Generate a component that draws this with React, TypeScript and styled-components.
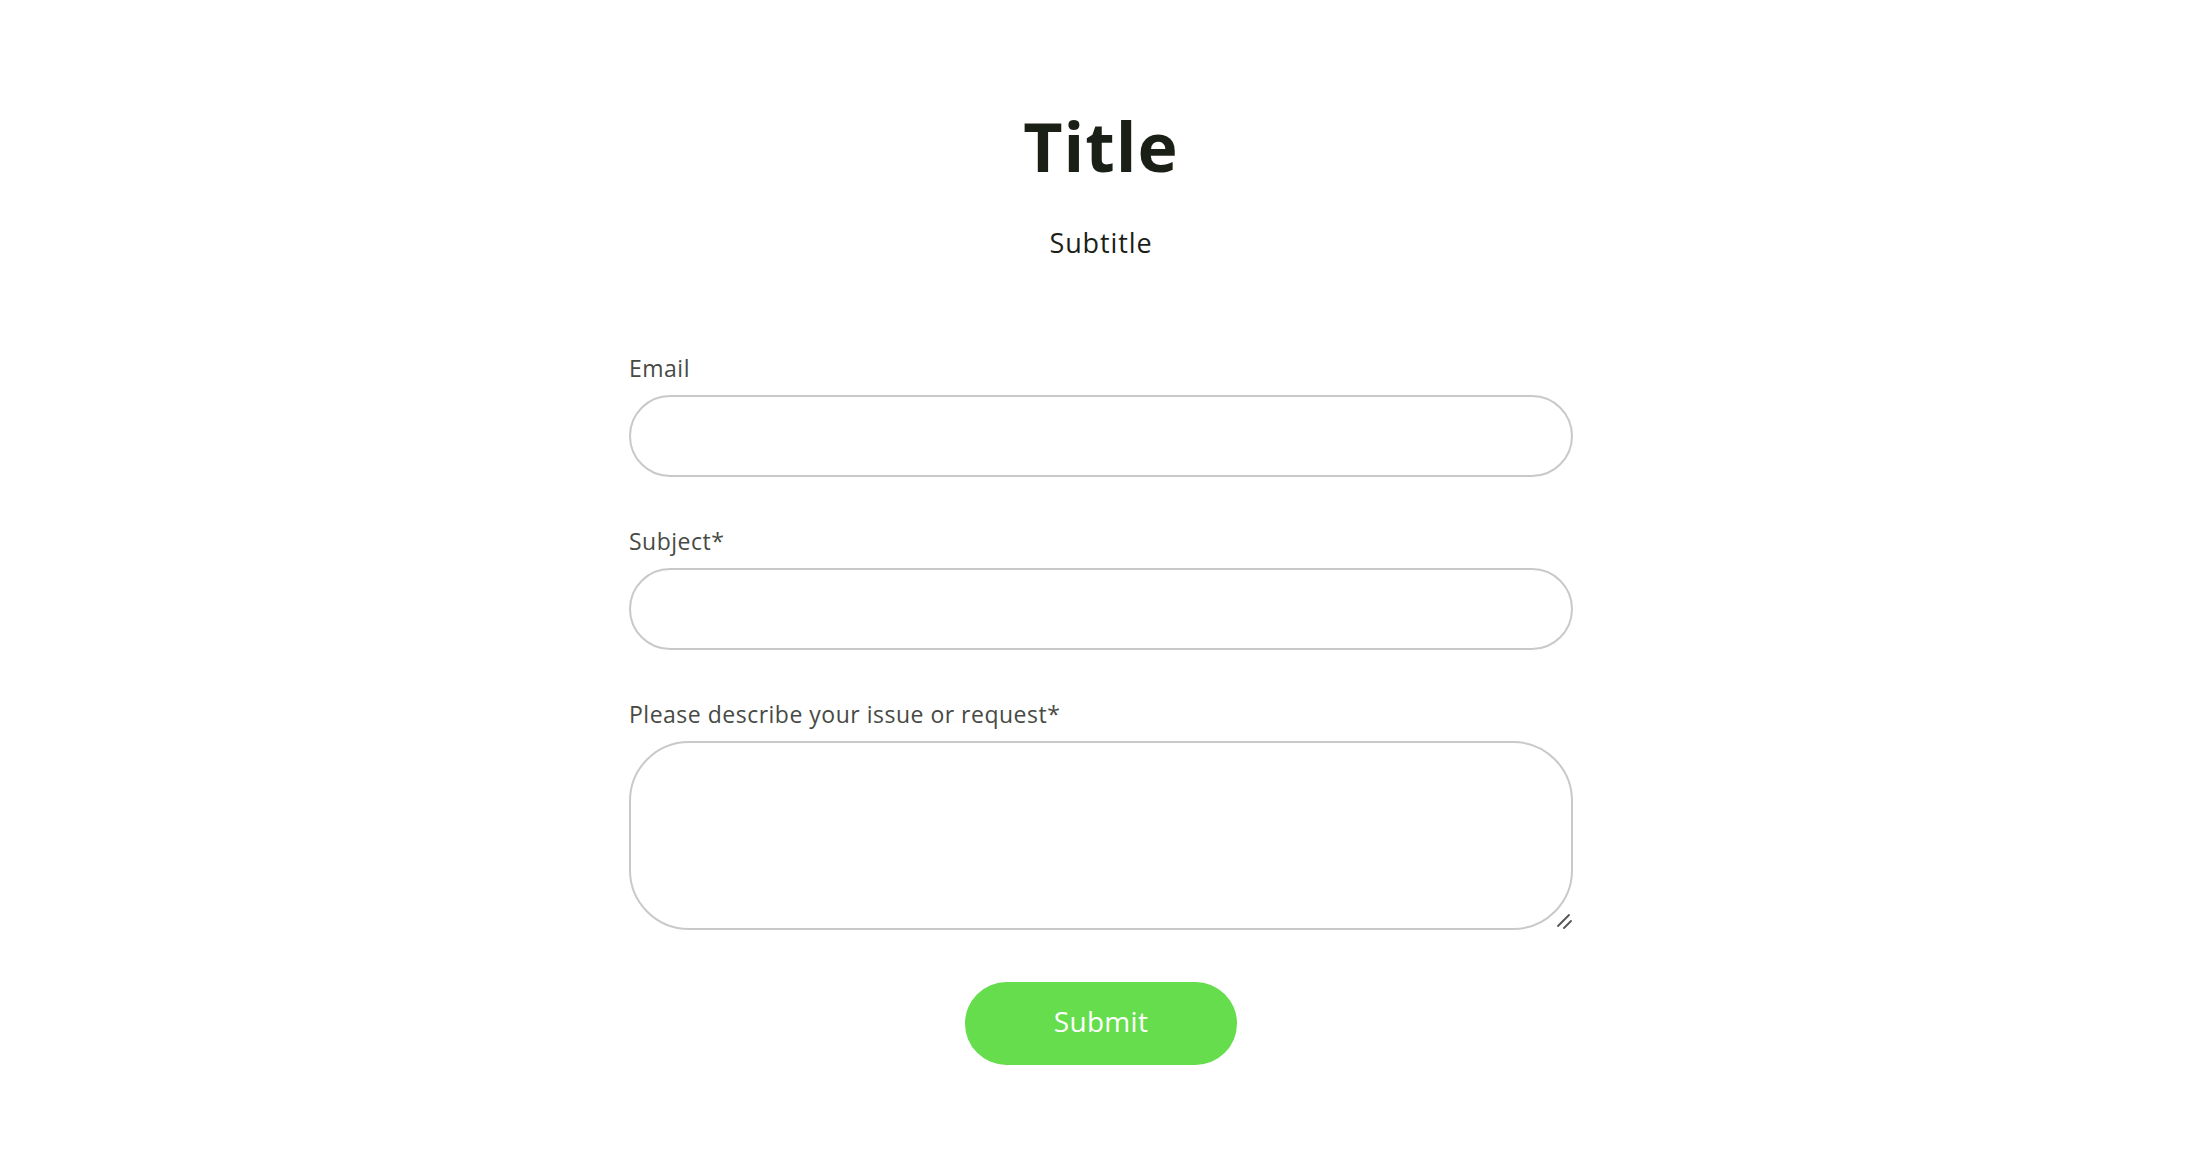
import React from "react";
import styled, { createGlobalStyle } from "styled-components";

const GlobalStyle = createGlobalStyle`
  html, body {
    margin: 0;
    padding: 0;
    background: #ffffff;
  }
  body {
    font-family: "Open Sans", "Liberation Sans", sans-serif;
  }
  * { box-sizing: border-box; }
`;

const Page = styled.main`
  display: flex;
  flex-direction: column;
  align-items: center;
  padding-top: 109px;
  padding-bottom: 92px;
`;

const Title = styled.h1`
  margin: 0;
  font-family: "Open Sans", "Liberation Sans", sans-serif;
  font-weight: 700;
  font-size: 68px;
  line-height: 74px;
  letter-spacing: 1px;
  color: #1b2016;
`;

const Subtitle = styled.p`
  margin: 46px 0 0;
  font-size: 27px;
  line-height: 1;
  color: #1b1f18;
  letter-spacing: 0.9px;
`;

const Form = styled.form`
  width: 944px;
  margin-top: 100px;
  display: flex;
  flex-direction: column;
  align-items: stretch;
  gap: 52px;
`;

const Field = styled.div`
  display: flex;
  flex-direction: column;
  gap: 15px;
`;

const Label = styled.label`
  font-size: 23px;
  line-height: 24px;
  color: #474a44;
  letter-spacing: 0.5px;
`;

const Input = styled.input`
  width: 100%;
  height: 82px;
  border: 2px solid #c9c9c9;
  border-radius: 41px;
  padding: 0 36px;
  font: inherit;
  font-size: 22px;
  background: #ffffff;
  outline: none;
`;

const AreaWrap = styled.div`
  position: relative;
`;

const TextArea = styled.textarea`
  width: 100%;
  height: 189px;
  border: 2px solid #c9c9c9;
  border-radius: 60px;
  padding: 24px 36px;
  font: inherit;
  font-size: 22px;
  background: #ffffff;
  outline: none;
  resize: vertical;
  display: block;
  &::-webkit-resizer {
    background: transparent;
  }
`;

const Grip = styled.svg`
  position: absolute;
  right: 0;
  bottom: 1px;
  width: 18px;
  height: 18px;
  pointer-events: none;
`;

const Actions = styled.div`
  display: flex;
  justify-content: center;
`;

const SubmitButton = styled.button`
  width: 272px;
  height: 83px;
  border: none;
  border-radius: 42px;
  background: #65dd4c;
  color: #ffffff;
  font-family: "Open Sans", "Liberation Sans", sans-serif;
  font-size: 28px;
  letter-spacing: 0.3px;
  padding: 0 0 5px;
  cursor: pointer;
`;

export default function App() {
  return (
    <>
      <GlobalStyle />
      <Page>
        <Title>Title</Title>
        <Subtitle>Subtitle</Subtitle>
        <Form onSubmit={(e) => e.preventDefault()}>
          <Field>
            <Label htmlFor="email">Email</Label>
            <Input id="email" type="email" />
          </Field>
          <Field>
            <Label htmlFor="subject">Subject*</Label>
            <Input id="subject" type="text" />
          </Field>
          <Field>
            <Label htmlFor="desc">Please describe your issue or request*</Label>
            <AreaWrap>
              <TextArea id="desc" />
              <Grip viewBox="0 0 18 18" aria-hidden="true">
                <line x1="3" y1="15" x2="14" y2="4" stroke="#555555" strokeWidth="1.8" strokeLinecap="round" />
                <line x1="9" y1="17" x2="16" y2="10" stroke="#555555" strokeWidth="1.8" strokeLinecap="round" />
              </Grip>
            </AreaWrap>
          </Field>
          <Actions>
            <SubmitButton type="submit">Submit</SubmitButton>
          </Actions>
        </Form>
      </Page>
    </>
  );
}
